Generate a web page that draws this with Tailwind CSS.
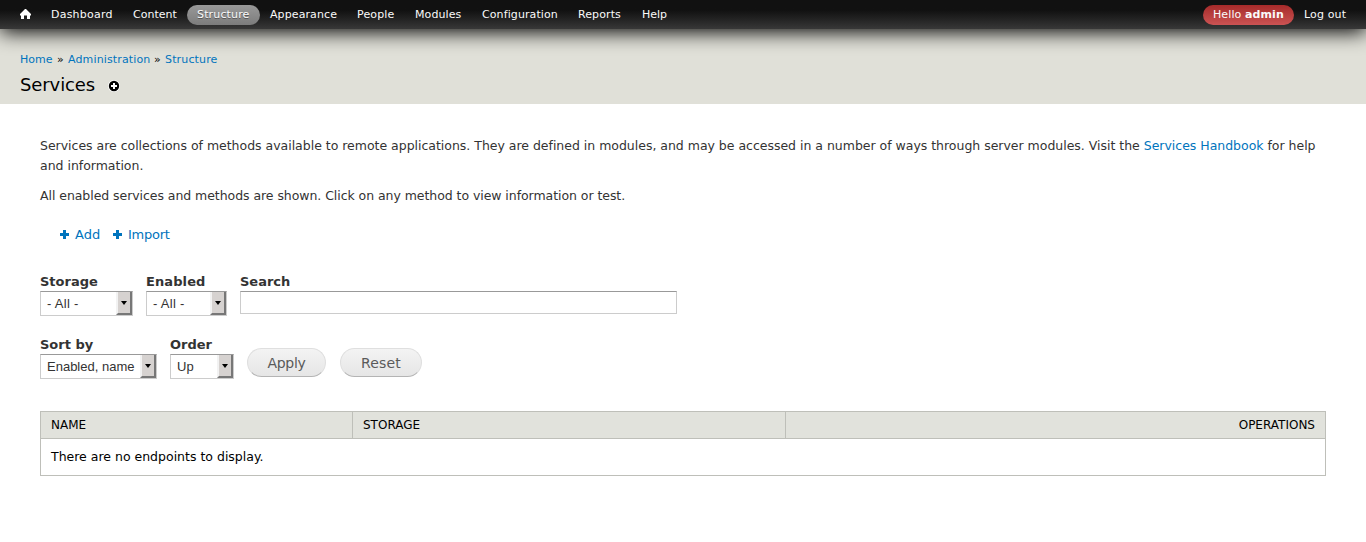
<!DOCTYPE html>
<html lang="en">
<head>
<meta charset="utf-8">
<title>Services</title>
<script src="https://cdn.jsdelivr.net/npm/@tailwindcss/browser@4"></script>
</head>
<body class="h-[542px] overflow-hidden bg-white font-['DejaVu_Sans',sans-serif] text-[12.5px] text-[#333]">
<nav class="relative z-10 flex h-[29px] items-start bg-linear-to-b from-[#111] from-35% to-[#383838] pt-[5px] pl-5 pr-[10px] text-[11px] leading-[19px] whitespace-nowrap text-[#fafafa] shadow-[0_3px_20px_#000]">
  <a class="mt-[4px] mr-[10px] block w-[11px]"><svg class="block" width="11" height="10" viewBox="0 0 11 10" fill="#fff"><path d="M5 0 H6 L11 5 V6.500 H10 V10 H7 V6.500 H4 V10 H1 V6.500 H0 V5 Z"/></svg></a>
  <a class="w-[82px] px-[10px] tracking-[0.22px]">Dashboard</a>
  <a class="w-[64px] px-[10px]">Content</a>
  <a class="h-5 w-[73px] rounded-full bg-linear-to-b from-[#999] to-[#7c7c7c] px-[10px] tracking-[0.15px] [text-shadow:0_1px_0_#555]">Structure</a>
  <a class="w-[87px] px-[10px] tracking-[0.1px]">Appearance</a>
  <a class="w-[58px] px-[10px] tracking-[0.15px]">People</a>
  <a class="w-[67px] px-[10px] tracking-[0.1px]">Modules</a>
  <a class="w-[96px] px-[10px] tracking-[0.1px]">Configuration</a>
  <a class="w-[64px] px-[10px] tracking-[0.1px]">Reports</a>
  <a class="w-[46px] px-[10px]">Help</a>
  <a class="ml-auto h-5 w-[91px] rounded-full bg-linear-to-b from-[#a52a2a] to-[#cc5353] px-[10px] tracking-[0.1px]">Hello <b>admin</b></a>
  <a class="w-[62px] px-[10px] tracking-[0.15px]">Log out</a>
</nav>
<header class="h-[75px] bg-[#e0e0d8] px-5 pt-[23px] text-black">
  <div class="flex text-[11px] leading-4 whitespace-nowrap"><a class="w-[37px] text-[#0074bd]">Home</a><span class="w-[11px]">»</span><a class="w-[86px] tracking-[0.14px] text-[#0074bd]">Administration</a><span class="w-[11px]">»</span><a class="tracking-[0.15px] text-[#0074bd]">Structure</a></div>
  <div class="mt-[5px] flex items-start">
    <h1 class="w-[88px] text-[18px] leading-6 tracking-[-0.1px]">Services</h1>
    <svg class="mt-[7px] block" width="12" height="12" viewBox="0 0 12 12"><circle cx="6" cy="6" r="6" fill="#fff"/><circle cx="6" cy="6" r="5.200" fill="#000"/><path d="M5 3h2v2h2v2H7v2H5V7H3V5h2z" fill="#fff"/></svg>
  </div>
</header>
<main class="px-10 pt-8">
  <p class="leading-5 tracking-[-0.016px]">Services are collections of methods available to remote applications. They are defined in modules, and may be accessed in a number of ways through server modules. Visit the <a class="text-[#0074bd]">Services Handbook</a> for help<br>and information.</p>
  <p class="mt-[10px] leading-5 tracking-[-0.056px]">All enabled services and methods are shown. Click on any method to view information or test.</p>
  <div class="mt-[19px] flex pl-5 text-[13px] leading-5 text-[#0074bd]">
    <a class="flex w-[53px]"><svg class="mt-[5px] mr-[6px] block" width="9" height="9" viewBox="0 0 9 9" fill="#0074bd"><path d="M3 0h3v3h3v3H6v3H3V6H0V3h3z"/></svg>Add</a>
    <a class="flex tracking-[-0.25px]"><svg class="mt-[5px] mr-[6px] block" width="9" height="9" viewBox="0 0 9 9" fill="#0074bd"><path d="M3 0h3v3h3v3H6v3H3V6H0V3h3z"/></svg>Import</a>
  </div>
  <div class="mt-[27px] flex gap-[13px] text-[13px]">
    <div class="w-[93px]"><label class="block h-[19px] leading-[19px] font-bold">Storage</label>
      <div class="flex h-[25px] border border-[#ccc] border-t-[#999] font-['Liberation_Sans',sans-serif]"><span class="flex-1 pl-[6px] leading-[23px] tracking-[0.3px]">- All -</span><span class="flex w-4 items-center justify-center border-2 border-t-0 border-[#777] border-t-[#eee] border-l-[#f2f2f2] bg-[#d6d2d0]"><svg width="6" height="4" viewBox="0 0 7 4" preserveAspectRatio="none"><path d="M0 0h7L3.500 4z"/></svg></span></div></div>
    <div class="w-[81px]"><label class="block h-[19px] leading-[19px] font-bold tracking-[0.1px]">Enabled</label>
      <div class="flex h-[25px] border border-[#ccc] border-t-[#999] font-['Liberation_Sans',sans-serif]"><span class="flex-1 pl-[6px] leading-[23px] tracking-[0.3px]">- All -</span><span class="flex w-4 items-center justify-center border-2 border-t-0 border-[#777] border-t-[#eee] border-l-[#f2f2f2] bg-[#d6d2d0]"><svg width="6" height="4" viewBox="0 0 7 4" preserveAspectRatio="none"><path d="M0 0h7L3.500 4z"/></svg></span></div></div>
    <div class="w-[437px]"><label class="block h-[19px] leading-[19px] font-bold">Search</label>
      <div class="h-[23px] border border-[#ccc] border-t-[#999]"></div></div>
  </div>
  <div class="mt-[19px] flex text-[13px]">
    <div class="mr-[13px] w-[117px]"><label class="block h-[19px] leading-[19px] font-bold">Sort by</label>
      <div class="flex h-[25px] border border-[#ccc] border-t-[#999] font-['Liberation_Sans',sans-serif]"><span class="flex-1 pl-[6px] leading-[23px] whitespace-nowrap">Enabled, name</span><span class="flex w-4 items-center justify-center border-2 border-t-0 border-[#777] border-t-[#eee] border-l-[#f2f2f2] bg-[#d6d2d0]"><svg width="6" height="4" viewBox="0 0 7 4" preserveAspectRatio="none"><path d="M0 0h7L3.500 4z"/></svg></span></div></div>
    <div class="mr-[13px] w-[64px]"><label class="block h-[19px] leading-[19px] font-bold">Order</label>
      <div class="flex h-[25px] border border-[#ccc] border-t-[#999] font-['Liberation_Sans',sans-serif]"><span class="flex-1 pl-[6px] leading-[23px]">Up</span><span class="flex w-4 items-center justify-center border-2 border-t-0 border-[#777] border-t-[#eee] border-l-[#f2f2f2] bg-[#d6d2d0]"><svg width="6" height="4" viewBox="0 0 7 4" preserveAspectRatio="none"><path d="M0 0h7L3.500 4z"/></svg></span></div></div>
    <button class="mt-[13px] mr-[14px] h-[29px] w-[79px] rounded-full border border-[#dfdfdf] border-b-[#b4b4b4] bg-linear-to-b from-[#f3f3f3] to-[#e6e6e6] pt-[2px] text-[14px] tracking-[-0.3px] text-[#5a5a5a]">Apply</button>
    <button class="mt-[13px] h-[29px] w-[82px] rounded-full border border-[#dfdfdf] border-b-[#b4b4b4] bg-linear-to-b from-[#f3f3f3] to-[#e6e6e6] pt-[2px] text-[14px] tracking-[0.2px] text-[#5a5a5a]">Reset</button>
  </div>
  <div class="mt-8 h-[65px] border border-[#bebfb9] text-black">
    <div class="flex h-[27px] border-b border-[#bebfb9] bg-[#e1e2dc] text-[12px] leading-[26px]">
      <div class="w-[312px] border-r border-[#bebfb9] pl-[10px]">NAME</div>
      <div class="w-[433px] border-r border-[#bebfb9] pl-[10px]">STORAGE</div>
      <div class="flex-1 pr-[10px] text-right">OPERATIONS</div>
    </div>
    <div class="pl-[10px] leading-[35px]">There are no endpoints to display.</div>
  </div>
</main>
</body>
</html>
